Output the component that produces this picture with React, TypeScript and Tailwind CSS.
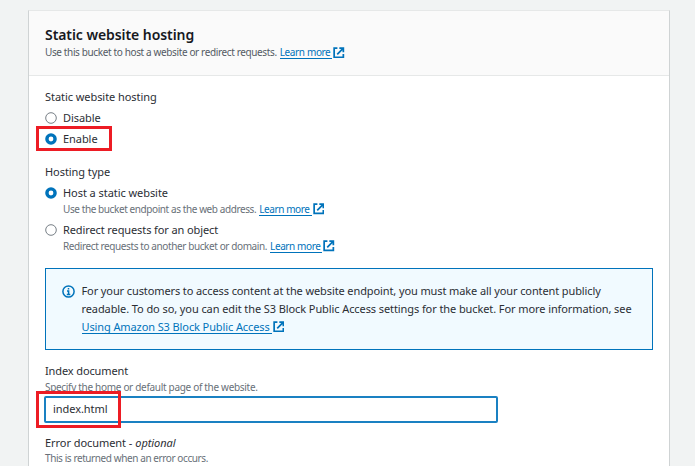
import React from "react";

function ExternalIcon() {
  return (
    <svg className="ml-px h-[11.5px] w-[11.5px] shrink-0" viewBox="0 0 12 12" fill="none" stroke="#0073bb" strokeWidth="1.8">
      <path d="M4.6 1.2H1.2v9.6h9.6V7.4" />
      <path d="M6.6 1.2h4.2v4.2M10.8 1.2 4.4 7.6" />
    </svg>
  );
}

function Link({ children, className }: { children: React.ReactNode; className: string }) {
  return (
    <a className="flex items-center text-[#0073bb]">
      <span className={"border-b border-[#0073bb] pr-[2px] " + className}>{children}</span>
      <ExternalIcon />
    </a>
  );
}

function Radio({ checked }: { checked?: boolean }) {
  return (
    <svg className="-ml-[0.5px] mr-[6.5px] h-3 w-3 shrink-0" viewBox="0 0 12 12">
      {checked ? (
        <circle cx="6" cy="6" r="4.1" fill="#fff" stroke="#0073bb" strokeWidth="3.4" />
      ) : (
        <circle cx="6" cy="6" r="5.3" fill="#fff" stroke="#687078" strokeWidth="0.9" />
      )}
    </svg>
  );
}

export default function App() {
  return (
    <div className="relative h-[466px] w-[695px] overflow-hidden bg-[#f1f3f3] pl-7 pt-[10px] font-['Noto_Sans',sans-serif] text-[11px] tracking-[-0.06px] whitespace-nowrap text-[#2b2e34]">
      <div className="h-[470px] w-[642px] border border-[#cfd3d4] border-t-[#e6e8e8] bg-white">
        <header className="h-[65px] border-b border-[#e6e8e8] bg-[#fafafa] pl-4 pt-[13px]">
          <h2 className="flex h-5 items-center text-[14px] font-semibold text-[#16191f]">
            <span className="tracking-[-0.07px]">Static website hosting</span>
          </h2>
          <div className="flex h-[17px] items-center text-[10px] tracking-[-0.37px] text-[#545b64]">
            <span className="mr-[3px]">Use this bucket to host a website or redirect requests.</span>
            <Link className="leading-[12px]">Learn more</Link>
          </div>
        </header>
        <main className="flex flex-col pl-4 pt-3">
          <div className="flex h-[18px] items-center"><span>Static website hosting</span></div>
          <label className="mt-[3px] flex h-[18px] items-center"><Radio /><span>Disable</span></label>
          <label className="mt-[3px] flex h-[18px] items-center"><Radio checked /><span>Enable</span></label>
          <div className="mt-[15px] flex h-[18px] items-center"><span>Hosting type</span></div>
          <label className="mt-[3px] flex h-[18px] items-center"><Radio checked /><span>Host a static website</span></label>
          <div className="flex h-[14px] items-center pl-[18px] text-[10px] tracking-[-0.41px] text-[#687078]">
            <span className="mr-[3px]">Use the bucket endpoint as the web address.</span>
            <Link className="leading-[12px]">Learn more</Link>
          </div>
          <label className="mt-[5px] flex h-[18px] items-center"><Radio /><span className="tracking-[-0.105px]">Redirect requests for an object</span></label>
          <div className="flex h-[14px] items-center pl-[18px] text-[10px] tracking-[-0.4px] text-[#687078]">
            <span className="mr-[3px]">Redirect requests to another bucket or domain.</span>
            <Link className="leading-[12px]">Learn more</Link>
          </div>
          <section className="mt-[15px] flex h-[82px] w-[608px] border border-[#0073bb] bg-[#f1faff] pl-4 pt-[13px] tracking-[-0.105px]">
            <svg className="mt-[3px] mr-[6.5px] h-[13px] w-[13px] shrink-0" viewBox="0 0 13 13" fill="none" stroke="#0073bb" strokeWidth="1.5">
              <circle cx="6.5" cy="6.5" r="5.6" />
              <path d="M6.5 3v1.6M5 6h1.6v3.3M4.8 9.5h3.5" />
            </svg>
            <div>
              <div className="flex h-[18px] items-center"><span>For your customers to access content at the website endpoint, you must make all your content publicly</span></div>
              <div className="flex h-[18px] items-center"><span className="tracking-[-0.09px]">readable. To do so, you can edit the S3 Block Public Access settings for the bucket. For more information, see</span></div>
              <div className="flex h-[17px] items-center"><Link className="leading-[13px]">Using Amazon S3 Block Public Access</Link></div>
            </div>
          </section>
          <div className="mt-3 flex h-[18px] items-center"><span className="tracking-[-0.12px]">Index document</span></div>
          <div className="flex h-[14px] items-center text-[10px] tracking-[-0.31px] text-[#687078]"><span>Specify the home or default page of the website.</span></div>
          <div className="mt-[2px] -ml-px flex h-[27px] w-[454px] items-center rounded-[2px] border-2 border-[#1a81c2] pl-[7px]"><span>index.html</span></div>
          <div className="mt-[11px] flex h-[18px] items-center"><span className="mr-[3px]">Error document -</span><span className="italic">optional</span></div>
          <div className="flex h-[13px] items-center text-[10px] tracking-[-0.41px] text-[#687078]"><span>This is returned when an error occurs.</span></div>
        </main>
      </div>
      <div className="absolute top-[126px] left-[36px] h-[25px] w-[76px] border-[3px] border-[#ed1c24]" />
      <div className="absolute top-[391px] left-[36px] h-[37px] w-[85px] border-[3px] border-[#ed1c24]" />
    </div>
  );
}
